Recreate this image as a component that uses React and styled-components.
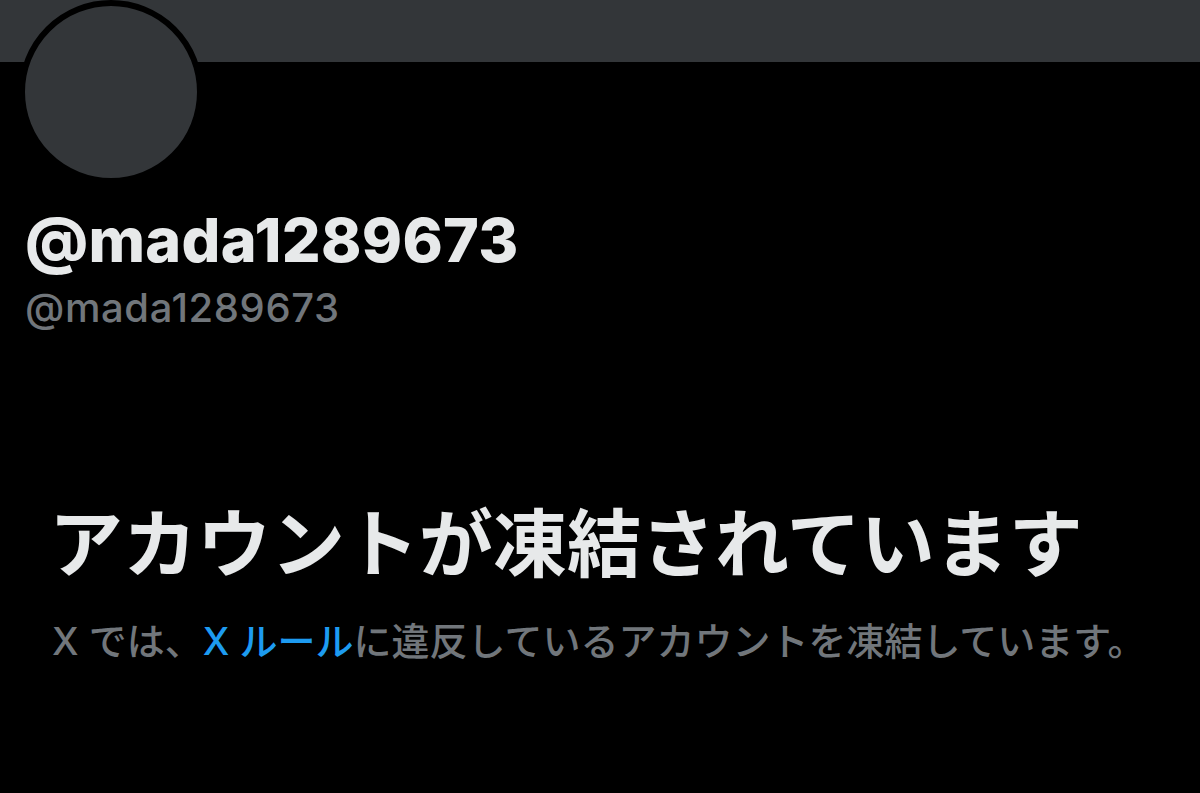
import React from "react";
import styled, { createGlobalStyle } from "styled-components";

const GlobalStyle = createGlobalStyle`
  html, body {
    margin: 0;
    padding: 0;
    background-color: #000000;
  }
  body {
    font-family: Inter, "Noto Sans CJK JP", sans-serif;
    overflow: hidden;
  }
`;

const Page = styled.div`
  width: 1200px;
  height: 793px;
  background-color: #000000;
  overflow: hidden;
`;

const Banner = styled.div`
  width: 100%;
  height: 62px;
  background-color: #333639;
`;

const Profile = styled.div`
  padding: 0 25px;
`;

const Avatar = styled.div`
  width: 172px;
  height: 172px;
  margin-top: -62px;
  margin-left: -6px;
  border: 6px solid #000000;
  border-radius: 50%;
  background-color: #333639;
`;

const DisplayName = styled.div`
  margin-top: 22px;
  font-family: Inter, sans-serif;
  font-weight: 800;
  font-size: 61px;
  line-height: 68px;
  letter-spacing: 0.3px;
  color: #e7e9ea;
`;

const Handle = styled.div`
  margin-top: 10px;
  font-family: Inter, sans-serif;
  font-weight: 500;
  font-size: 40px;
  line-height: 48px;
  letter-spacing: 0.6px;
  color: #71767b;
`;

const Notice = styled.div`
  padding: 0 52px;
  margin-top: 163px;
`;

const NoticeTitle = styled.div`
  margin-left: -3px;
  font-family: "Noto Sans CJK JP", sans-serif;
  font-weight: 700;
  font-size: 74px;
  line-height: 88px;
  color: #e7e9ea;
  white-space: nowrap;
`;

const NoticeText = styled.div`
  margin-top: 35px;
  font-family: Inter, "Noto Sans CJK JP", sans-serif;
  font-weight: 500;
  font-size: 38px;
  line-height: 46px;
  color: #71767b;
  white-space: nowrap;
`;

const RuleLink = styled.a`
  color: #1d9bf0;
  text-decoration: none;
`;

export default function App() {
  return (
    <Page>
      <GlobalStyle />
      <Banner />
      <Profile>
        <Avatar />
        <DisplayName>@mada1289673</DisplayName>
        <Handle>@mada1289673</Handle>
      </Profile>
      <Notice>
        <NoticeTitle>アカウントが凍結されています</NoticeTitle>
        <NoticeText>
          X では、<RuleLink href="#">X ルール</RuleLink>に違反しているアカウントを凍結しています。
        </NoticeText>
      </Notice>
    </Page>
  );
}
